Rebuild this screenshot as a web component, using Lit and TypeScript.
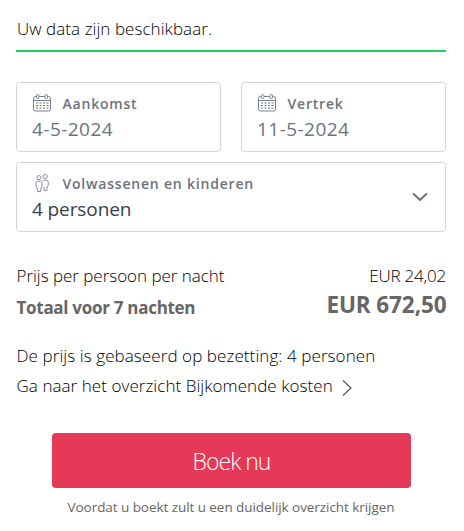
import { LitElement, html, css, svg } from "lit";
import { customElement, property } from "lit/decorators.js";

const calendar = html`<svg class="icon" width="18" height="18" viewBox="0 0 18 18" fill="none" stroke="currentColor" stroke-width=".9">
  <path d="M3.200 2.500H2.500a2 2 0 0 0-2 2v10.500a2 2 0 0 0 2 2h13a2 2 0 0 0 2-2V4.500a2 2 0 0 0-2-2h-.7M6.200 2.500h5.600M.5 6.500h17"/>
  <rect x="3.500" y=".6" width="2.500" height="4" rx="1.200"/><rect x="12" y=".6" width="2.500" height="4" rx="1.200"/>
  ${[9, 11.5, 14].map((y) => svg`<path stroke-width="1.200" stroke-dasharray="2 1.500" d=${`M3 ${y}h12.500`}/>`)}
</svg>`;

const people = html`<svg class="icon" width="18" height="18" viewBox="0 0 18 18" fill="none" stroke="currentColor" stroke-width=".8" stroke-linejoin="round">
  <circle cx="6" cy="3.700" r="2.100"/><circle cx="12.300" cy="2.500" r="2.100"/>
  <path d="M4.500 7.300h3q1.600.3 1.600 2v3q0 1-1 1.200l-.5 4H4.700l-.5-4q-1.200-.3-1.200-1.200v-3q0-1.700 1.500-2z"/>
  <path d="M10 6.700q.6-.5 1.300-.5h2.200q1.800.3 1.800 2v3.200q0 .8-1 1.100l-.5 4h-2.500l-.5-3.500"/>
</svg>`;

@customElement("booking-field")
export class BookingField extends LitElement {
  @property() label = "";
  @property() value = "";
  @property() kind = "date";

  static styles = css`
    :host { display: flex; align-items: center; box-sizing: border-box; height: 70px; padding: 0 17px 0 15px;
      border: 1px solid #d1d5db; border-radius: 4px; color: #6b7280; background: #fff; }
    .body { flex: 1; padding-top: 1px; }
    .head { display: flex; align-items: center; height: 22px; gap: 11.500px; padding-left: 1px; }
    .icon { display: block; margin-top: -2px; }
    .label { font-size: 14px; font-weight: 600; letter-spacing: .8px; line-height: 22px; }
    .value { font-size: 19px; line-height: 28px; white-space: nowrap; }
    .date { letter-spacing: .45px; }
    .guests { color: #374151; letter-spacing: -.1px; }
    .chevron { display: block; }
  `;

  render() {
    const guests = this.kind === "guests";
    return html`<div class="body">
        <div class="head">${guests ? people : calendar}<span class="label">${this.label}</span></div>
        <div class="value ${this.kind}">${this.value}</div>
      </div>
      ${guests ? html`<svg class="chevron" width="16" height="10" viewBox="0 0 16 10" fill="none" stroke="currentColor" stroke-width="2" stroke-linecap="round" stroke-linejoin="round"><path d="M1.700 2l6.300 6 6.300-6"/></svg>` : null}`;
  }
}

@customElement("app-root")
export class AppRoot extends LitElement {
  static styles = css`
    :host { display: block; box-sizing: border-box; height: 531px; padding: 14px 18px 0 16px; background: #fff;
      color: #000; font-family: "Open Sans", "Noto Sans", sans-serif; font-size: 17px; white-space: nowrap; }
    .status { height: 36px; line-height: 30px; border-bottom: 2px solid #24ce66; font-weight: 340; text-indent: 1px; letter-spacing: .06px; }
    .fields { display: grid; grid-template-columns: 1fr 1fr; gap: 10px 20px; margin-top: 30px; }
    .wide { grid-column: 1 / -1; }
    .prices { margin-top: 28px; }
    .row { display: flex; justify-content: space-between; align-items: center; height: 31px; font-weight: 340; }
    .rate { letter-spacing: -.03px; text-indent: .5px; }
    .price { letter-spacing: -.2px; }
    .total { color: #666; font-weight: 700; }
    .sum { letter-spacing: -.29px; padding: 2px 0 0 .5px; }
    .amount { font-size: 22.500px; letter-spacing: -.1px; margin: -4px -.5px 0 0; }
    .notes { margin-top: 19px; line-height: 30px; font-weight: 340; text-indent: .5px; }
    .basis { letter-spacing: .085px; }
    .link { display: flex; align-items: center; gap: 9px; letter-spacing: .06px; }
    .arrow { display: block; margin-top: 4px; }
    .book { display: block; width: 359px; height: 55px; margin: 32px 0 0 36px; padding: 0; border: 0; border-radius: 4px;
      background: #e63957; color: #fff; font: 300 23px "Open Sans", "Noto Sans", sans-serif; letter-spacing: -1px; }
    .hint { margin-top: 9px; text-align: center; font-size: 13.500px; letter-spacing: -.06px; line-height: 20px; color: #666; }
  `;

  render() {
    return html`
      <div class="status">Uw data zijn beschikbaar.</div>
      <div class="fields">
        <booking-field label="Aankomst" value="4-5-2024"></booking-field>
        <booking-field label="Vertrek" value="11-5-2024"></booking-field>
        <booking-field class="wide" kind="guests" label="Volwassenen en kinderen" value="4 personen"></booking-field>
      </div>
      <div class="prices">
        <div class="row"><span class="rate">Prijs per persoon per nacht</span><span class="price">EUR 24,02</span></div>
        <div class="row total"><span class="sum">Totaal voor 7 nachten</span><span class="amount">EUR 672,50</span></div>
      </div>
      <div class="notes">
        <div class="basis">De prijs is gebaseerd op bezetting: 4 personen</div>
        <div class="link"><span>Ga naar het overzicht Bijkomende kosten</span>
          <svg class="arrow" width="11" height="18" viewBox="0 0 11 18" fill="none" stroke="#555" stroke-width="1.200"><path d="M1 1.500l8 7.500-8 7.500"/></svg>
        </div>
      </div>
      <button class="book">Boek nu</button>
      <div class="hint">Voordat u boekt zult u een duidelijk overzicht krijgen</div>
    `;
  }
}
